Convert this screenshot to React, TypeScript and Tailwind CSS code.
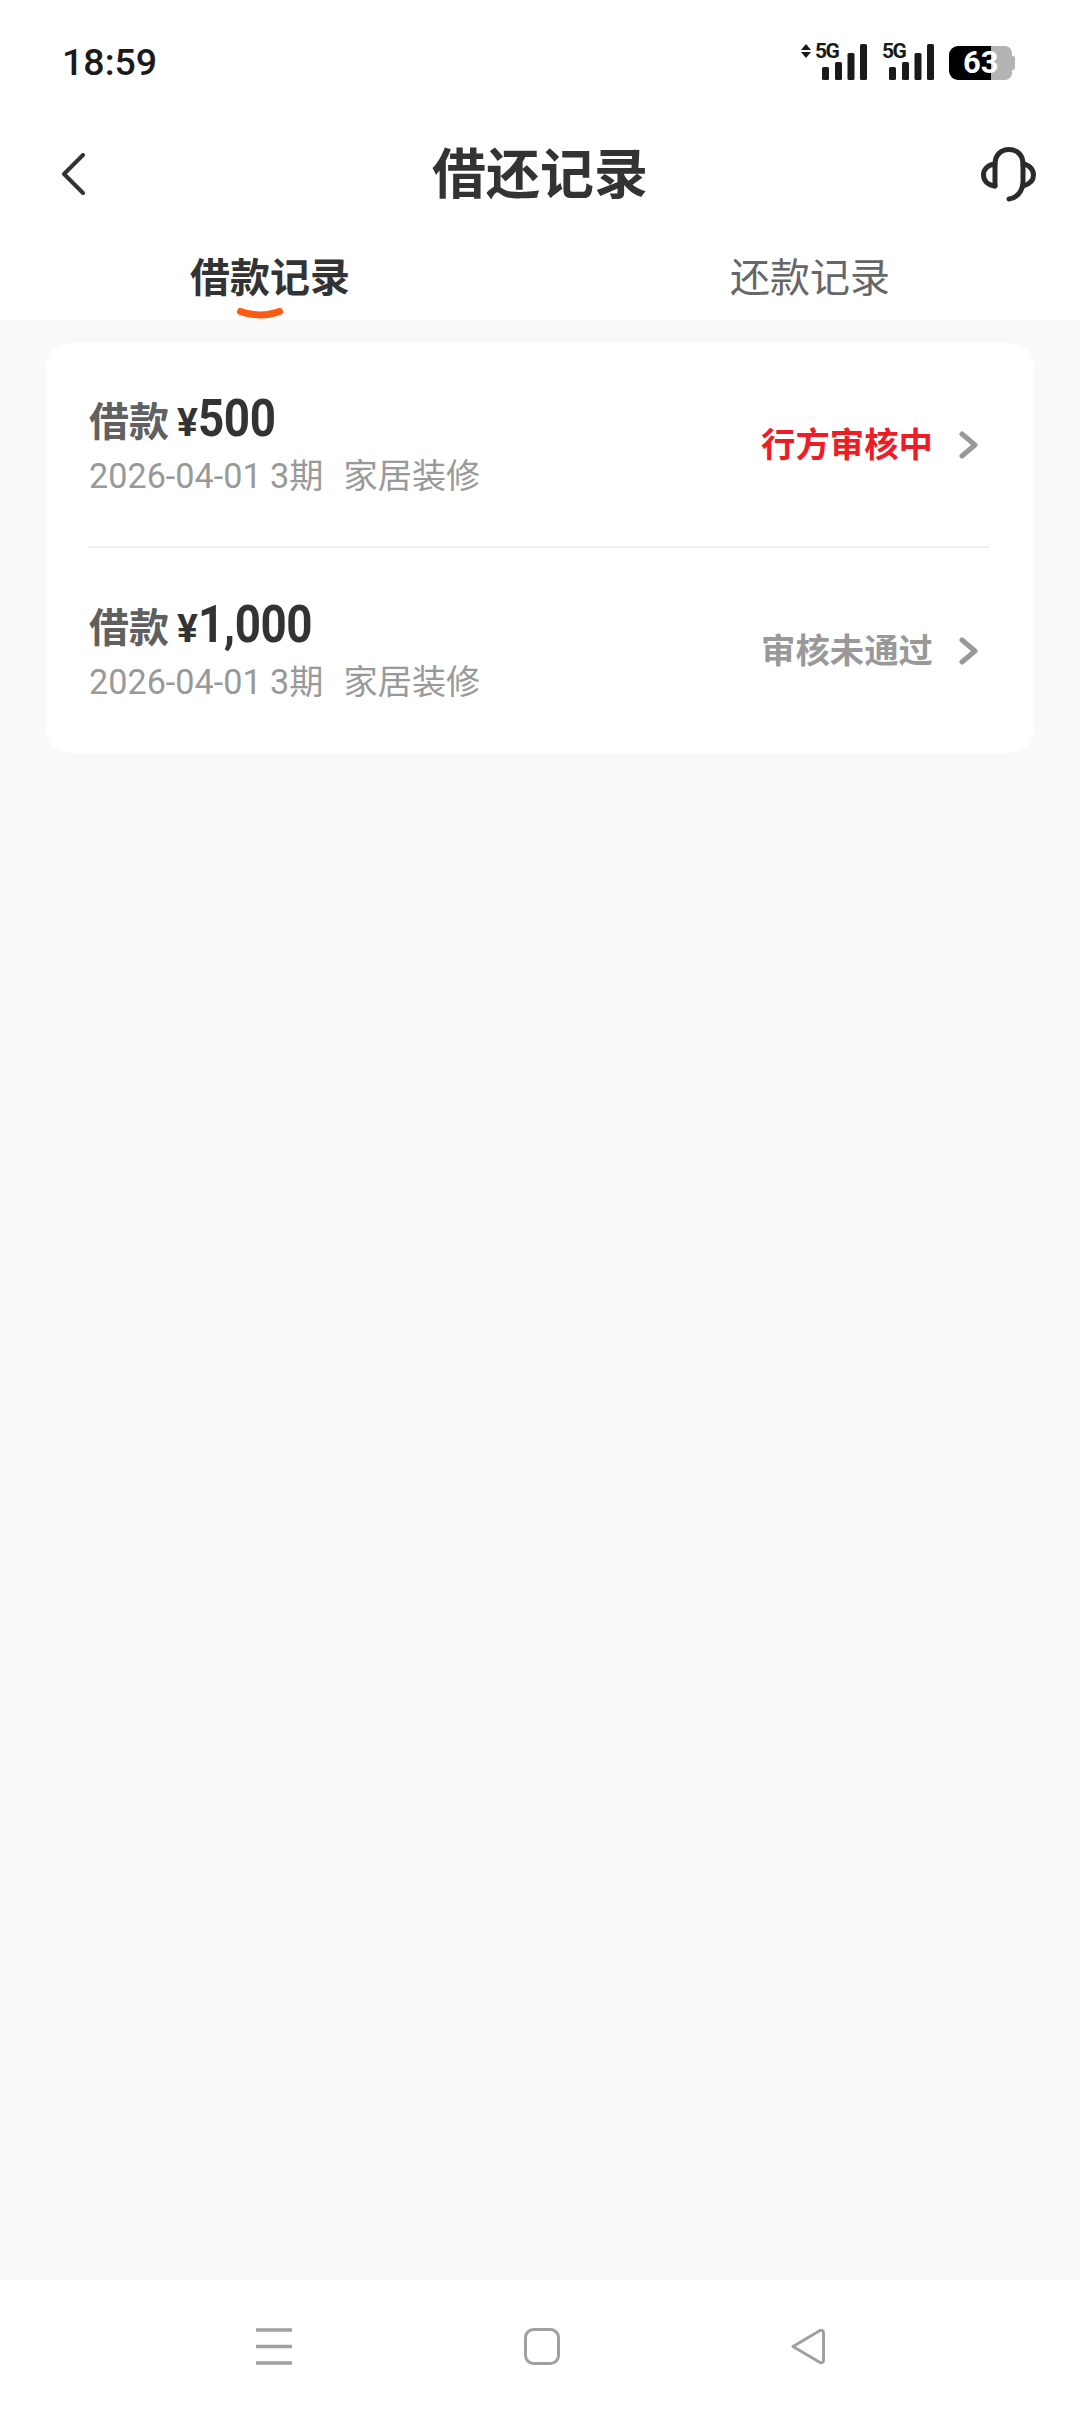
import React from "react";

const CJK = "font-['Roboto','Noto_Sans_CJK_SC',sans-serif]";

function Signal({ arrows }: { arrows?: boolean }) {
  return (
    <div className="relative w-[67px] h-[36px]">
      <svg width="67" height="36" viewBox="0 0 67 36" className="absolute left-0 top-0">
        {arrows && (
          <g fill="#1a1a1a">
            <path d="M1 6 L6 0 L11 6 Z" />
            <path d="M1 8 L11 8 L6 14 Z" />
          </g>
        )}
        <rect x="22" y="23" width="7" height="13" rx="1.5" fill="#1a1a1a" />
        <rect x="35" y="18" width="7" height="18" rx="1.5" fill="#1a1a1a" />
        <rect x="47.5" y="9" width="7" height="27" rx="1.5" fill="#1a1a1a" />
        <rect x="60" y="0" width="7" height="36" rx="1.5" fill="#1a1a1a" />
      </svg>
      <span className="absolute left-[15px] top-[-5px] font-['Roboto',sans-serif] font-bold text-[21px] leading-[24px] tracking-[-1.5px] text-[#1a1a1a]">
        5G
      </span>
    </div>
  );
}

function Battery() {
  return (
    <div className="relative w-[66px] h-[34px] flex ml-[15px] mt-[2px]">
      <div className="w-[42px] h-[34px] bg-black rounded-l-[9px]" />
      <div className="w-[21px] h-[34px] bg-[#b4b4b4] rounded-r-[7px]" />
      <div className="w-[3px] h-[14px] mt-[10px] bg-[#b4b4b4] rounded-r-[2px]" />
      <span className="absolute left-[14px] top-0 font-['Roboto',sans-serif] font-bold text-[31px] leading-[34px] text-white">
        63
      </span>
    </div>
  );
}

function Row({
  amount,
  status,
  statusClass,
  divider,
}: {
  amount: string;
  status: string;
  statusClass: string;
  divider?: boolean;
}) {
  return (
    <div className={`flex items-center justify-between h-[205px] ml-[42px] mr-[44px] ${divider ? "border-b-2 border-[#f2f2f2]" : ""}`}>
      <div className="flex flex-col">
        <div className="flex items-baseline h-[56px] ml-[1px]">
          <span className="font-bold text-[40px] leading-[56px] text-[#606060] mr-[8px]">借款</span>
          <span className="font-['Roboto',sans-serif] font-bold text-[39px] leading-[56px] text-[#333333]">¥</span>
          <span className="inline-block origin-left scale-x-[0.88] font-['Roboto',sans-serif] font-bold text-[52px] leading-[56px] tracking-[-0.5px] text-[#333333]">
            {amount}
          </span>
        </div>
        <div className="flex h-[44px] ml-[1px] text-[34.2px] leading-[44px] text-[#999999] mt-[7px] whitespace-pre">
          <span>2026-04-01 3期</span>
          <span className="ml-[20px]">家居装修</span>
        </div>
      </div>
      <div className="flex items-center">
        <span className={`font-bold text-[34.4px] leading-[44px] ${statusClass}`}>{status}</span>
        <svg width="20" height="30" viewBox="0 0 20 30" className="ml-[26px] mr-[11px]">
          <path d="M3 4 L16 15 L3 26" fill="none" stroke="#999999" strokeWidth="5" strokeLinecap="round" strokeLinejoin="round" />
        </svg>
      </div>
    </div>
  );
}

export default function App() {
  return (
    <div className={`w-[1080px] h-[2412px] flex flex-col bg-[#f9f9f9] ${CJK}`}>
      <header className="bg-white h-[320px] flex flex-col shrink-0">
        {/* status bar */}
        <div className="h-[124px] flex justify-between pl-[62px] pr-[65px] pt-[44px]">
          <span className="font-['Roboto',sans-serif] font-medium text-[37.5px] leading-[34px] mt-[1px] text-[#1a1a1a]">18:59</span>
          <div className="flex">
            <Signal arrows />
            <Signal />
            <Battery />
          </div>
        </div>
        {/* title bar */}
        <div className="grid grid-cols-[1fr_auto_1fr] items-center h-[100px]">
          <div className="pl-[61px]">
            <svg width="24" height="42" viewBox="0 0 24 42" className="block">
              <path d="M22 2 L3 21 L22 40" fill="none" stroke="#333333" strokeWidth="4" strokeLinecap="round" strokeLinejoin="round" />
            </svg>
          </div>
          <h1 className="font-bold text-[54px] leading-[60px] pt-[3px] text-[#333333]">借还记录</h1>
          <div className="flex justify-end pr-[44px]">
            <svg width="56" height="56" viewBox="0 0 56 56" className="block">
              <g fill="none" stroke="#2b2b2b" strokeWidth="5" strokeLinecap="round" strokeLinejoin="round">
                <path d="M15 40 V18 C15 9 21 3.5 29 3.5 C37 3.5 43 9 43 18 V35 C43 45 37 52 29 53" />
                <path d="M15 18 C7 19 3.5 24 3.5 29 C3.5 35 8 39 15 40" />
                <path d="M43 18 C50 19 53.5 24 53.5 29 C53.5 34 50 38 43 40" />
              </g>
            </svg>
          </div>
        </div>
        {/* tabs */}
        <div className="flex h-[96px]">
          <div className="relative flex-1 flex justify-center pt-[27px]">
            <span className="font-bold text-[40px] leading-[56px] text-[#333333]">借款记录</span>
            <svg width="46" height="12" viewBox="0 0 46 12" className="absolute left-[237px] bottom-0">
              <path d="M3.5 3.5 C15 8 31 8 42.5 3.5" fill="none" stroke="#ff5a12" strokeWidth="7" strokeLinecap="round" />
            </svg>
          </div>
          <div className="flex-1 flex justify-center pt-[27px]">
            <span className="text-[40px] leading-[56px] text-[#666666]">还款记录</span>
          </div>
        </div>
      </header>

      <main className="flex-1 px-[46px] pt-[23px]">
        <section className="bg-white rounded-[24px] flex flex-col h-[410px]">
          <Row amount="500" status="行方审核中" statusClass="text-[#ee1c25]" divider />
          <Row amount="1,000" status="审核未通过" statusClass="text-[#999999]" />
        </section>
      </main>

      {/* system navigation */}
      <nav className="bg-white h-[132px] shrink-0 flex items-start pt-[48px] pl-[256px]">
        <svg width="36" height="37" viewBox="0 0 36 37" className="block">
          <path d="M0 2 H36 M0 18.5 H36 M0 35 H36" stroke="#a0a0a0" strokeWidth="3.5" />
        </svg>
        <svg width="36" height="37" viewBox="0 0 36 37" className="block ml-[232px]">
          <rect x="1.5" y="1.5" width="33" height="34" rx="8" fill="none" stroke="#a0a0a0" strokeWidth="3" />
        </svg>
        <svg width="34" height="37" viewBox="0 0 34 37" className="block ml-[231px]">
          <path d="M2 18.5 L29 2.5 Q32.5 1.5 32.5 5 V32 Q32.5 35.5 29 34.5 Z" fill="none" stroke="#a0a0a0" strokeWidth="3" strokeLinejoin="round" />
        </svg>
      </nav>
    </div>
  );
}
